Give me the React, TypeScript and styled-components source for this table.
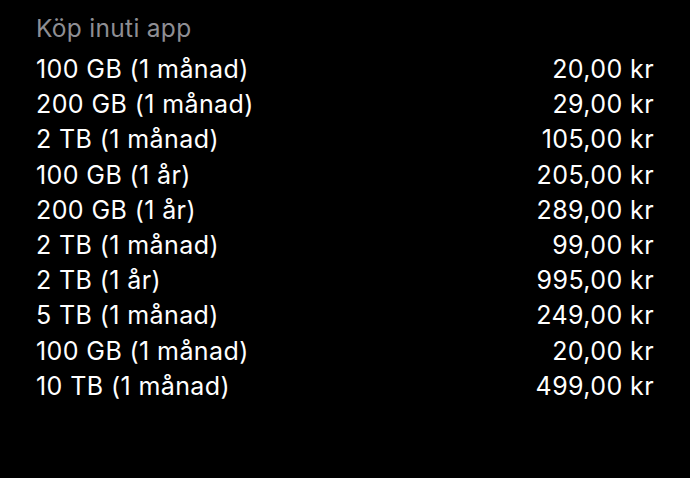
import React from "react";
import styled, { createGlobalStyle } from "styled-components";

const Global = createGlobalStyle`
  html, body { margin: 0; padding: 0; background: #000; }
  body { width: 690px; height: 478px; overflow: hidden; }
`;

const Page = styled.div`
  width: 690px;
  height: 478px;
  background: #000;
  box-sizing: border-box;
  padding: 11px 36px 0 36px;
  font-family: Inter, "Liberation Sans", sans-serif;
`;

const Title = styled.div`
  color: #8e8e93;
  font-size: 24.5px;
  letter-spacing: 0.3px;
  line-height: 34px;
  height: 41px;
`;

const List = styled.div`
  display: flex;
  flex-direction: column;
  width: 618px;
`;

const Row = styled.div`
  display: flex;
  justify-content: space-between;
  color: #fff;
  font-size: 25px;
  letter-spacing: 0.4px;
  line-height: 35.2px;
`;

const items: [string, string][] = [
  ["100 GB (1 månad)", "20,00 kr"],
  ["200 GB (1 månad)", "29,00 kr"],
  ["2 TB (1 månad)", "105,00 kr"],
  ["100 GB (1 år)", "205,00 kr"],
  ["200 GB (1 år)", "289,00 kr"],
  ["2 TB (1 månad)", "99,00 kr"],
  ["2 TB (1 år)", "995,00 kr"],
  ["5 TB (1 månad)", "249,00 kr"],
  ["100 GB (1 månad)", "20,00 kr"],
  ["10 TB (1 månad)", "499,00 kr"],
];

export default function App() {
  return (
    <>
      <Global />
      <Page>
        <Title>Köp inuti app</Title>
        <List>
          {items.map(([name, price], i) => (
            <Row key={i}>
              <span>{name}</span>
              <span>{price}</span>
            </Row>
          ))}
        </List>
      </Page>
    </>
  );
}
